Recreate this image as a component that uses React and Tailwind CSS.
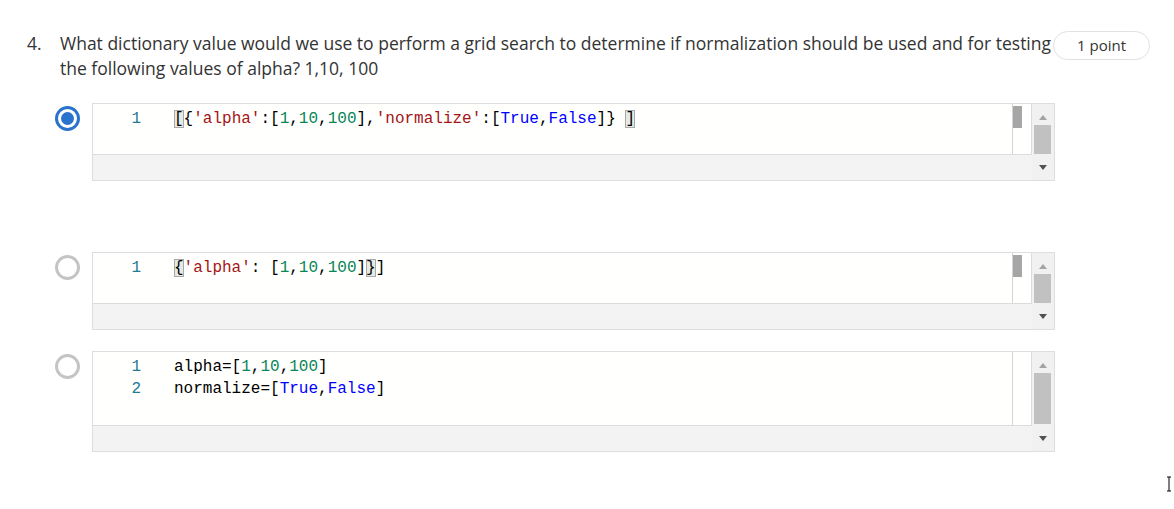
const mono = { fontFamily: '"Liberation Mono", "DejaVu Sans Mono", monospace' };

function Radio({ checked }) {
    return (
        <div className="w-[26px] h-[26px] flex items-center justify-center shrink-0">
            {checked ? (
                <div className="w-[25px] h-[25px] rounded-full border-[3px] border-[#2a73cc] flex items-center justify-center">
                    <div className="w-[13px] h-[13px] rounded-full bg-[#2a73cc]" />
                </div>
            ) : (
                <div className="w-[25px] h-[25px] rounded-full border-[3px] border-[#c4c4c4] bg-white" />
            )}
        </div>
    );
}

function Box({ children }) {
    return <span className="outline outline-1 outline-[#a9a9a9] bg-[#e5ebe4] -outline-offset-1">{children}</span>;
}

const S = ({ children }) => <span className="text-[#a31515]">{children}</span>;
const N = ({ children }) => <span className="text-[#098658]">{children}</span>;
const K = ({ children }) => <span className="text-[#0000ff]">{children}</span>;

function Editor({ lines, height, codeHeight, marker, thumbTop, thumbHeight }) {
    return (
        <div className="flex-1 flex border border-[#dedede] bg-[#f3f3f3]" style={{ height }}>
            <div className="flex-1 flex flex-col">
                <div
                    className="flex bg-[#fffffe] border-r border-b border-[#dcdcdc]"
                    style={{ height: codeHeight }}
                >
                    <div className="flex-1 pt-[4px]" style={mono}>
                        {lines.map((line, i) => (
                            <div key={i} className="flex h-[22px] items-center text-[16px] leading-[22px]">
                                <span className="w-[48px] text-right text-[#237893]">{i + 1}</span>
                                <span className="ml-[33px] whitespace-pre text-black">{line}</span>
                            </div>
                        ))}
                    </div>
                    <div className="w-[19px] border-l border-[#d4d4d4] relative">
                        {marker && <div className="absolute left-0 top-[2px] w-[9px] h-[22px] bg-[#a6a6a6]" />}
                    </div>
                </div>
                <div className="flex-1" />
            </div>
            <div className="w-[22px] bg-[#f1f1f1] relative">
                <svg width="8" height="5" viewBox="0 0 8 5" className="absolute left-[7px] top-[11px]">
                    <path d="M0 5 L4 0 L8 5 Z" fill="#a3a3a3" />
                </svg>
                <div
                    className="absolute left-[2px] w-[17px] bg-[#c1c1c1]"
                    style={{ top: thumbTop, height: thumbHeight }}
                />
                <svg width="8" height="5" viewBox="0 0 8 5" className="absolute left-[7px] bottom-[10px]">
                    <path d="M0 0 L8 0 L4 5 Z" fill="#505050" />
                </svg>
            </div>
        </div>
    );
}

function Option({ checked, className, ...rest }) {
    return (
        <div className={`flex items-start ${className}`}>
            <div className="w-[92px] pl-[54px] pt-[2px]">
                <Radio checked={checked} />
            </div>
            <div className="w-[963px] flex">
                <Editor {...rest} />
            </div>
        </div>
    );
}

export default function App() {
    return (
        <div className="w-[1174px] h-[509px] bg-white relative" style={{ fontFamily: '"Open Sans", "Noto Sans", sans-serif' }}>
            <div className="flex items-start pt-[31px]">
                <div className="w-[60px] pl-[27px] text-[17.5px] leading-[25px] text-[#333]">4.</div>
                <div className="w-[993px] text-[17.5px] leading-[25px] text-[#333] whitespace-nowrap">
                    What dictionary value would we use to perform a grid search to determine if normalization should be used and for testing
                    <br />
                    the following values of alpha? 1,10, 100
                </div>
                <div className="w-[97px] h-[29px] rounded-full border border-[#e1e1e1] flex items-center justify-center text-[15px] text-[#333]">
                    1 point
                </div>
            </div>

            <Option
                checked
                className="mt-[22px]"
                height={78}
                codeHeight={51}
                marker
                thumbTop={21}
                thumbHeight={29}
                lines={[
                    <>
                        <Box>[</Box>{'{'}<S>'alpha'</S>:[<N>1</N>,<N>10</N>,<N>100</N>],<S>'normalize'</S>:[<K>True</K>,<K>False</K>]{'}'} <Box>]</Box>
                    </>,
                ]}
            />

            <Option
                className="mt-[71px]"
                height={78}
                codeHeight={51}
                marker
                thumbTop={21}
                thumbHeight={29}
                lines={[
                    <>
                        <Box>{'{'}</Box><S>'alpha'</S>: [<N>1</N>,<N>10</N>,<N>100</N>]<Box>{'}'}</Box>]
                    </>,
                ]}
            />

            <Option
                className="mt-[21px]"
                height={101}
                codeHeight={74}
                thumbTop={21}
                thumbHeight={51}
                lines={[
                    <>
                        alpha=[<N>1</N>,<N>10</N>,<N>100</N>]
                    </>,
                    <>
                        normalize=[<K>True</K>,<K>False</K>]
                    </>,
                ]}
            />

            <svg width="8" height="16" viewBox="0 0 8 16" className="absolute left-[1166px] top-[476px]">
                <path d="M1 1 H3 V15 H1 M3 1 H5 M3 15 H5" stroke="#000" strokeWidth="1" fill="none" />
            </svg>
        </div>
    );
}
